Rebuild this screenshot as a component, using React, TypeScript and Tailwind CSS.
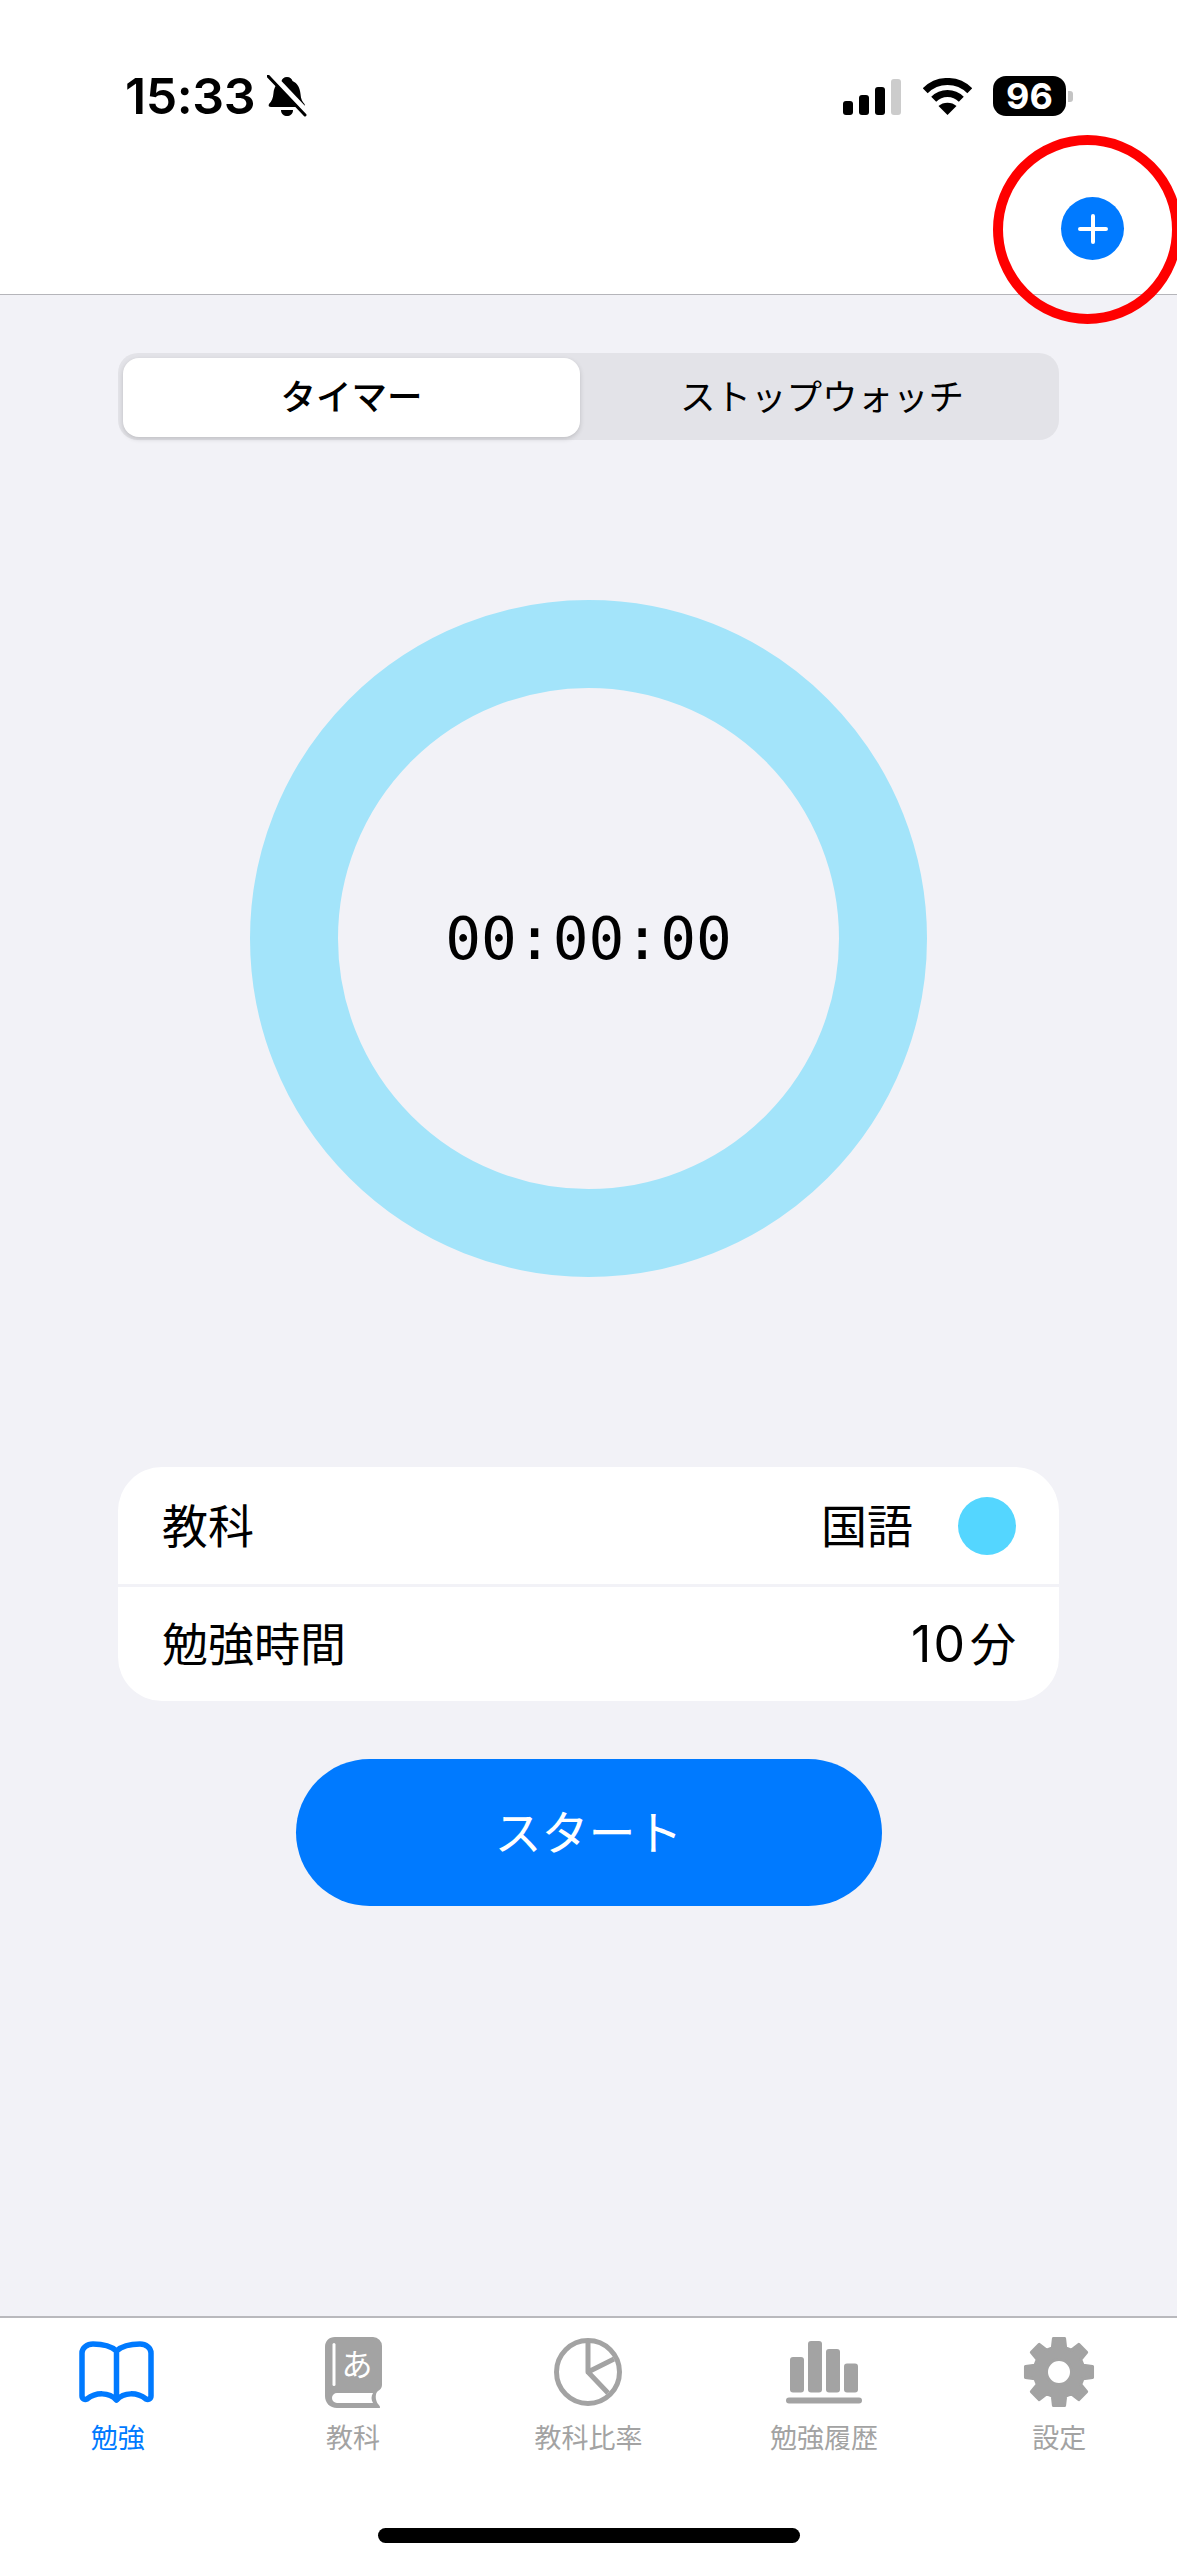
import React from "react";

const CJK = "font-['Inter','Noto_Sans_CJK_JP',sans-serif]";

function gearPath() {
  const cx = 36, cy = 36, R = 34, r = 25;
  const pts: string[] = [];
  const n = 8;
  for (let i = 0; i < n; i++) {
    const a = (i * 2 * Math.PI) / n - Math.PI / 2;
    const tip = 0.165, root = 0.27;
    const p = [
      [r, a - root],
      [R, a - tip],
      [R, a + tip],
      [r, a + root],
    ];
    p.forEach(([rad, ang]) => {
      pts.push(`${(cx + rad * Math.cos(ang)).toFixed(2)} ${(cy + rad * Math.sin(ang)).toFixed(2)}`);
    });
  }
  return `M${pts.join("L")}Z M${cx - 12.5} ${cy}a12.5 12.5 0 1 0 25 0a12.5 12.5 0 1 0-25 0Z`;
}

function BellSlash() {
  return (
    <svg width="40" height="42" viewBox="0 0 40 42" className="ml-[12px]">
      <path d="M20 2c3 0 5 2 5.500 4 5 2 7.500 7 8 13 .3 5 2 8 4 10 1 2 0 3-2 3H4c-2 0-3-1-2-3 3-3 4-6 4.500-11C7 12 10 8 14.500 6 15 4 17 2 20 2Z" fill="#000" />
      <path d="M14 35h12c0 4-3 6-6 6s-6-2-6-6Z" fill="#000" />
      <path d="M3 -1 39 37" stroke="#fff" strokeWidth="7" />
      <path d="M1 1 38 40" stroke="#000" strokeWidth="3" strokeLinecap="round" />
    </svg>
  );
}

function Wifi() {
  return (
    <svg width="49" height="37" viewBox="0 0 49 37">
      <path d="M2.200 12.700A31.500 31.500 0 0 1 46.800 12.700" fill="none" stroke="#000" strokeWidth="7" />
      <path d="M10.700 21.200A19.500 19.500 0 0 1 38.300 21.200" fill="none" stroke="#000" strokeWidth="7" />
      <path d="M24.500 37 15.500 28C20 23.500 29 23.500 33.500 28Z" fill="#000" />
    </svg>
  );
}

function BookIcon() {
  return (
    <svg width="75" height="62" viewBox="0 0 75 62" className="-translate-x-[1px]">
      <path
        d="M37.500 10C31 4 22 3 14 3 8 3 3 7 3 12V55C3 58 6 59 8 58 17 51 30 51 37.500 59 45 51 58 51 67 58 69 59 72 58 72 55V12C72 7 67 3 61 3 53 3 44 4 37.500 10ZM37.500 10V59"
        fill="none"
        stroke="#007aff"
        strokeWidth="5.500"
        strokeLinejoin="round"
      />
    </svg>
  );
}

function KanaBook() {
  return (
    <svg width="57" height="71" viewBox="0 0 57 71">
      <path
        d="M10 0H48a9 9 0 0 1 9 9V48c0 3-2 5-4 6-3 2-3 9 0 13 2 2 3 4 1 4H12C5 71 0 66 0 59V10C0 4 4 0 10 0Z"
        fill="#a3a3a3"
      />
      <path d="M12 56H48c-2 3-2 7 0 10H12a5 5 0 0 1 0-10Z" fill="#fff" />
      <rect x="7.500" y="6" width="3" height="43" rx="1.500" fill="#fff" />
      <text x="32" y="39" textAnchor="middle" fontSize="31" fill="#fff" fontFamily="'Noto Sans CJK JP',sans-serif">
        あ
      </text>
    </svg>
  );
}

function PieIcon() {
  return (
    <svg width="68" height="68" viewBox="0 0 68 68" fill="none" stroke="#a3a3a3" strokeWidth="5">
      <circle cx="34" cy="34" r="31.500" />
      <path d="M34 3V34L60 21M34 34 54 55" strokeLinejoin="round" />
    </svg>
  );
}

function BarsIcon() {
  return (
    <svg width="76" height="63" viewBox="0 0 76 63" fill="#a3a3a3">
      <rect x="4" y="16" width="14" height="35.500" rx="3" />
      <rect x="22" y="0" width="14" height="51.500" rx="3" />
      <rect x="40" y="8" width="14" height="43.500" rx="3" />
      <rect x="58" y="22.500" width="14" height="29" rx="3" />
      <rect x="0" y="56.500" width="76" height="6" rx="3" />
    </svg>
  );
}

function GearIcon() {
  return (
    <svg width="72" height="72" viewBox="0 0 72 72">
      <path d={gearPath()} fill="#a3a3a3" fillRule="evenodd" stroke="#a3a3a3" strokeWidth="3" strokeLinejoin="round" />
    </svg>
  );
}

const tabs: { label: string; icon: React.ReactNode; active?: boolean }[] = [
  { label: "勉強", icon: <BookIcon />, active: true },
  { label: "教科", icon: <KanaBook /> },
  { label: "教科比率", icon: <PieIcon /> },
  { label: "勉強履歴", icon: <BarsIcon /> },
  { label: "設定", icon: <GearIcon /> },
];

export default function App() {
  return (
    <div className={`relative flex h-[2560px] w-[1177px] flex-col overflow-hidden bg-[#f2f2f7] ${CJK}`}>
      {/* header */}
      <header className="h-[295px] shrink-0 border-b border-[#b5b5ba] bg-white pt-[75px]">
        <div className="flex h-[42px] items-center justify-between pl-[125px] pr-[104px]">
          <div className="flex items-center">
            <span className="text-[50px] font-semibold leading-none tracking-[-0.4px] text-black">15:33</span>
            <BellSlash />
          </div>
          <div className="flex items-center">
            <div className="flex h-[37px] items-end gap-[6px]">
              <div className="h-[14px] w-[10px] rounded-[3px] bg-black" />
              <div className="h-[20px] w-[10px] rounded-[3px] bg-black" />
              <div className="h-[28px] w-[10px] rounded-[3px] bg-black" />
              <div className="h-[36px] w-[10px] rounded-[3px] bg-[#cccccc]" />
            </div>
            <div className="ml-[22px]">
              <Wifi />
            </div>
            <div className="ml-[21px] flex h-[40px] w-[73px] items-center justify-center rounded-[13px] bg-black text-[36px] font-bold leading-none text-white">
              96
            </div>
            <div className="ml-[2px] h-[11px] w-[5px] rounded-r-[3px] bg-[#c4c4c4]" />
          </div>
        </div>
        <div className="flex justify-end pr-[53px] pt-[80px]">
          <button className="flex size-[63px] items-center justify-center rounded-full bg-[#007aff]">
            <svg width="30" height="30" viewBox="0 0 30 30" stroke="#fff" strokeWidth="4" strokeLinecap="round">
              <path d="M15 2V28M2 15H28" />
            </svg>
          </button>
        </div>
      </header>

      {/* main */}
      <main className="flex flex-1 flex-col items-center px-[118px] pt-[58px]">
        <div className="flex h-[87px] w-full rounded-[20px] bg-[#e3e3e8] p-[5px] pb-[3px]">
          <div className="flex w-[457px] items-center justify-center rounded-[16px] bg-white text-[35.500px] font-medium leading-none text-black shadow-[0_2px_5px_rgba(0,0,0,0.16)]">
            タイマー
          </div>
          <div className="flex flex-1 items-center justify-center pl-[10px] text-[35.500px] leading-none text-black">ストップウォッチ</div>
        </div>

        <div className="mt-[160px] flex size-[677px] items-center justify-center rounded-full border-[88px] border-[#a3e4fa]">
          <span className="font-['DejaVu_Sans_Mono',monospace] text-[59.500px] leading-none text-black">00:00:00</span>
        </div>

        <div className="mt-[190px] w-full overflow-hidden rounded-[44px] bg-white text-[46px] leading-none text-black">
          <div className="flex h-[117px] items-center justify-between pl-[44px] pr-[43px]">
            <span>教科</span>
            <div className="flex items-center gap-[45px]">
              <span>国語</span>
              <div className="size-[58px] rounded-full bg-[#54d6ff]" />
            </div>
          </div>
          <div className="h-[3px] bg-[#f2f2f7]" />
          <div className="flex h-[114px] items-center justify-between pl-[44px] pr-[43px]">
            <span>勉強時間</span>
            <span className="flex items-center">
              <span className="mr-[3px] text-[50px] tracking-[2px]">10</span>
              <span>分</span>
            </span>
          </div>
        </div>

        <button className="mt-[58px] flex h-[147px] w-[586px] items-center justify-center rounded-[73.500px] bg-[#007aff] text-[47px] leading-none text-white">
          スタート
        </button>
      </main>

      {/* tab bar */}
      <footer className="h-[244px] shrink-0 border-t-2 border-[#b9b9bd] bg-white">
        <nav className="grid grid-cols-5 pt-[16px]">
          {tabs.map((t) => (
            <div key={t.label} className="flex flex-col items-center">
              <div className="flex h-[76px] items-center justify-center">{t.icon}</div>
              <span className={`mt-[13px] text-[27px] leading-[32px] ${t.active ? "text-[#007aff]" : "text-[#a3a3a3]"}`}>
                {t.label}
              </span>
            </div>
          ))}
        </nav>
        <div className="mx-auto mt-[73px] h-[15px] w-[422px] rounded-full bg-black" />
      </footer>

      {/* annotation ring */}
      <div className="absolute left-[993px] top-[135px] size-[189px] rounded-full border-[10px] border-[#ff0000]" />
    </div>
  );
}
